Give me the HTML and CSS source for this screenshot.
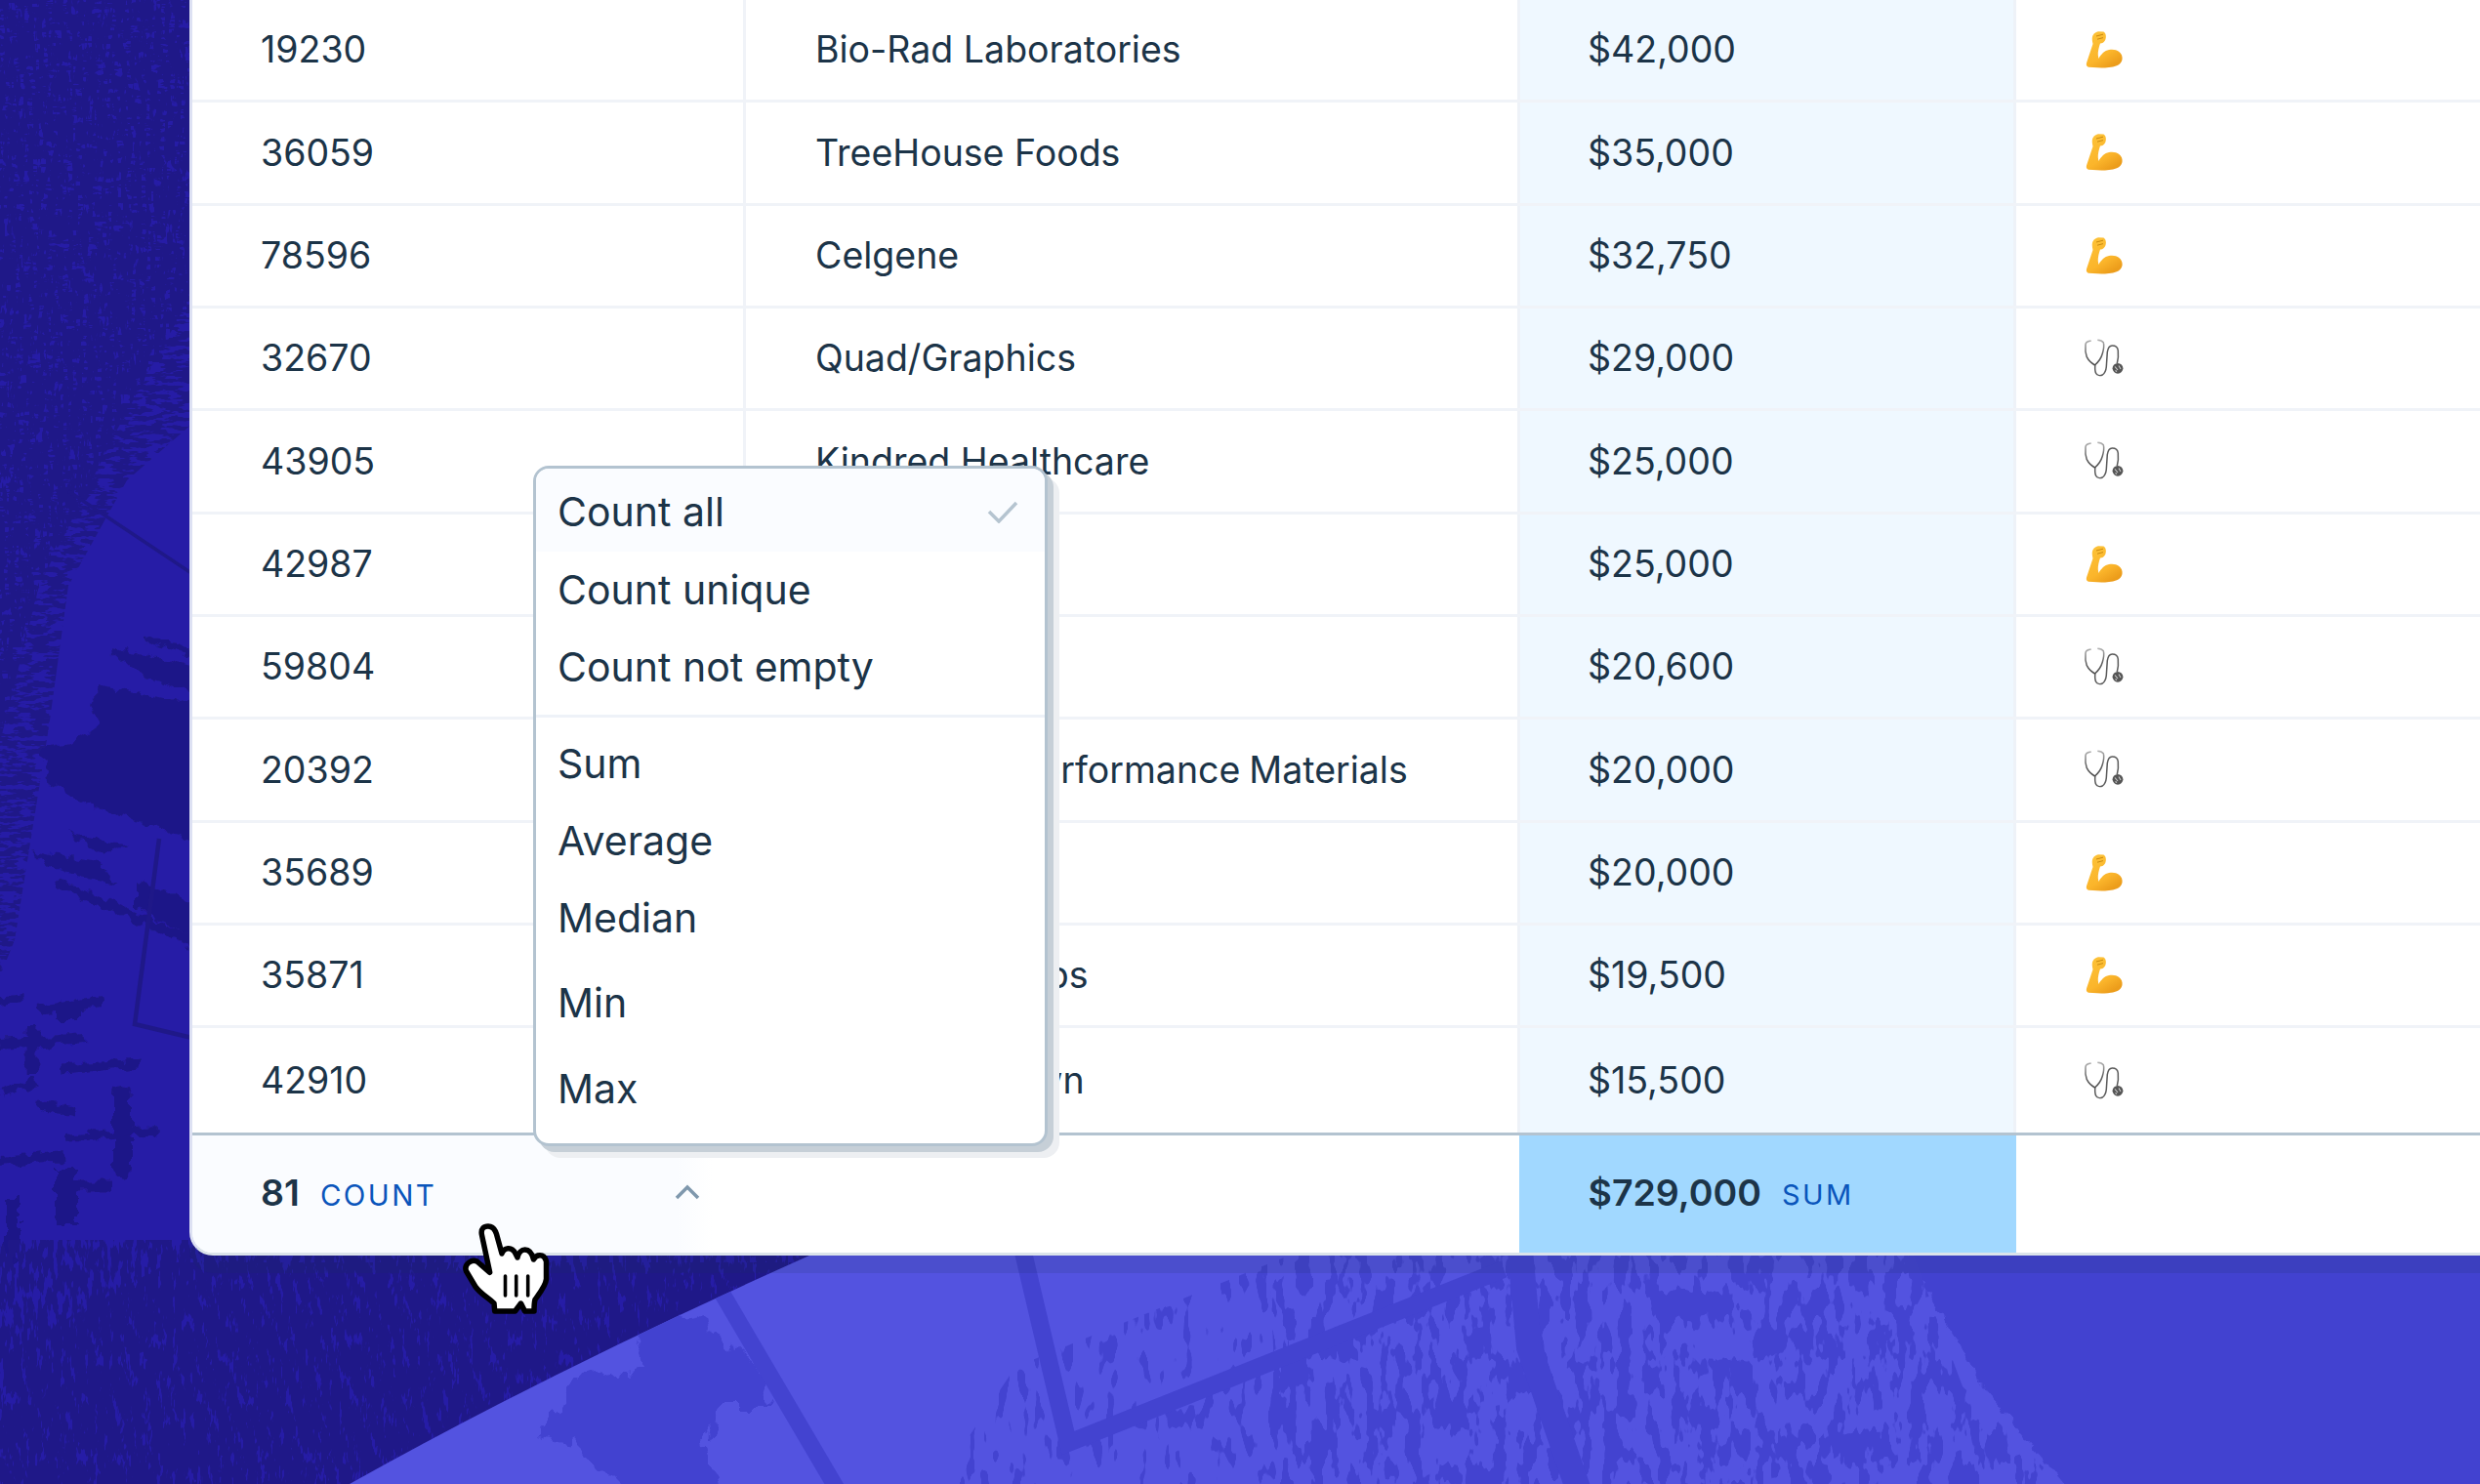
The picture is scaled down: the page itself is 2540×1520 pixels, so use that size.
FILE: index.html
```html
<!DOCTYPE html>
<html lang="en">
<head><meta charset="utf-8"><title>Table</title><link rel="stylesheet" href="styles.css"></head>
<body>
<svg class="backdrop" viewBox="0 0 2540 1520" aria-hidden="true">
  <defs>
    <filter id="grainH" x="0" y="0" width="100%" height="100%" color-interpolation-filters="sRGB">
      <feTurbulence type="fractalNoise" baseFrequency="0.06 0.22" numOctaves="3" seed="7"/>
      <feColorMatrix values="0 0 0 0 0.122  0 0 0 0 0.094  0 0 0 0 0.533  0 0 0 16 -7"/>
    </filter>
    <filter id="grainV" x="0" y="0" width="100%" height="100%" color-interpolation-filters="sRGB">
      <feTurbulence type="fractalNoise" baseFrequency="0.2 0.05" numOctaves="3" seed="11"/>
      <feColorMatrix values="0 0 0 0 0.122  0 0 0 0 0.094  0 0 0 0 0.533  0 0 0 16 -6.6"/>
    </filter>
    <filter id="fleckDense" x="0" y="0" width="100%" height="100%" color-interpolation-filters="sRGB">
      <feTurbulence type="fractalNoise" baseFrequency="0.07 0.028" numOctaves="3" seed="3"/>
      <feColorMatrix values="0 0 0 0 0.263  0 0 0 0 0.263  0 0 0 0 0.816  0 0 0 40 -20.2"/>
    </filter>
    <filter id="fleckSparse" x="0" y="0" width="100%" height="100%" color-interpolation-filters="sRGB">
      <feTurbulence type="fractalNoise" baseFrequency="0.09 0.03" numOctaves="2" seed="21"/>
      <feColorMatrix values="0 0 0 0 0.263  0 0 0 0 0.263  0 0 0 0 0.816  0 0 0 40 -24"/>
    </filter>
    <filter id="rough" x="-10%" y="-10%" width="120%" height="120%">
      <feTurbulence type="fractalNoise" baseFrequency="0.09" numOctaves="2" seed="5" result="n"/>
      <feDisplacementMap in="SourceGraphic" in2="n" scale="14" xChannelSelector="R" yChannelSelector="G"/>
    </filter>
    <filter id="roughBig" x="-10%" y="-10%" width="120%" height="120%">
      <feTurbulence type="fractalNoise" baseFrequency="0.05 0.03" numOctaves="3" seed="9" result="n"/>
      <feDisplacementMap in="SourceGraphic" in2="n" scale="34" xChannelSelector="R" yChannelSelector="G"/>
    </filter>
    <clipPath id="upperLeft"><path d="M0 0H197V434L130 492L70 600L50 745L15 963L0 1000Z"/></clipPath>
    <clipPath id="upperLeftDeep"><path d="M0 0H197V300L120 440L40 600L0 760Z"/></clipPath>
    <clipPath id="lowerLeft"><path d="M0 1270H830V1286Q567 1403 358 1520H0Z"/></clipPath>
    <clipPath id="lowerLeftDeep"><path d="M170 1286H830Q567 1403 358 1520H0V1380Z"/></clipPath>
    <clipPath id="lightArea"><path d="M829 1286H2540V1520H358Q567 1403 829 1286Z"/></clipPath>
    <clipPath id="fleckZoneDense"><path d="M1300 1286H1960L2010 1420L2110 1520H1310Z"/></clipPath>
    <clipPath id="fleckZoneSparse"><path d="M1040 1400L1320 1286V1520H960Z"/></clipPath>
  </defs>

  <rect width="2540" height="1520" fill="#261ca6"/>
  <rect width="2540" height="1520" filter="url(#grainH)" clip-path="url(#upperLeft)"/>
  <rect width="2540" height="1520" filter="url(#grainV)" clip-path="url(#upperLeftDeep)"/>

  <g fill="#1f1888" filter="url(#rough)">
    <path d="M43 767L77 759L100 744L93 721L103 704L205 721V862L100 828L50 802Z"/>
    <path d="M112 664L205 683V712L160 698L113 670Z"/>
    <path d="M147 650L205 667V674L150 656Z"/>
    <path d="M67 853L130 865L107 874Z"/>
    <path d="M30 871L100 882L120 908L50 888Z"/>
    <path d="M140 900L205 930V965L140 930Z"/>
  </g>
  <g fill="none" stroke="#1f1888" filter="url(#rough)">
    <path d="M60 905L205 968" stroke-width="10"/>
    <path d="M0 1026L25 1023M37 1034L107 1026" stroke-width="10"/>
    <path d="M68 1030V1046" stroke-width="24"/>
    <path d="M0 1069L88 1063" stroke-width="10"/>
    <path d="M33 1050V1100" stroke-width="13"/>
    <path d="M63 1095L143 1089" stroke-width="9"/>
    <path d="M125 1123V1198" stroke-width="18" stroke-linecap="round"/>
    <path d="M0 1120L37 1108M37 1132L77 1138" stroke-width="9"/>
    <path d="M67 1166L160 1158" stroke-width="8"/>
    <path d="M0 1190L67 1184" stroke-width="10"/>
    <path d="M68 1198V1255" stroke-width="22"/>
    <path d="M57 1215H113" stroke-width="11"/>
    <path d="M13 1226V1295" stroke-width="14"/>
  </g>
  <g fill="none" stroke="#1f1888">
    <path d="M70 503L205 593" stroke-width="3.5"/>
    <path d="M163 859L138 1049L205 1065" stroke-width="4.5"/>
  </g>

  <rect width="2540" height="1520" filter="url(#grainV)" clip-path="url(#lowerLeft)"/>
  <rect width="2540" height="1520" filter="url(#grainV)" clip-path="url(#lowerLeftDeep)" transform="translate(3 7)"/>

  <g clip-path="url(#lightArea)">
    <rect width="2540" height="1520" fill="#5353e0"/>
    <path d="M1945 1270H2580V1540H2130L2031 1420L1992 1353Z" fill="#4343d0" filter="url(#rough)"/>
    <rect width="2540" height="1520" filter="url(#fleckDense)" clip-path="url(#fleckZoneDense)"/>
    <rect width="2540" height="1520" filter="url(#fleckSparse)" clip-path="url(#fleckZoneSparse)"/>
    <path d="M640 1350L700 1340L760 1385L790 1440L740 1440L720 1470L735 1530H640L590 1480L550 1470L600 1410L660 1400Z" fill="#4343d0" filter="url(#roughBig)"/>
    <g fill="none" stroke="#4343d0">
      <path d="M725 1300L866 1540" stroke-width="17"/>
      <path d="M1045 1270L1094 1478L1540 1300" stroke-width="18"/>
      <path d="M1556 1270L1566 1380L1618 1530" stroke-width="26"/>
    </g>
  </g>
</svg>

<div class="card">
  <div class="row"><div class="cell id">19230</div><div class="cell name">Bio-Rad Laboratories</div><div class="cell pay">$42,000</div><div class="cell kind"><svg class="emoji"><use href="#arm"/></svg></div></div>
  <div class="row"><div class="cell id">36059</div><div class="cell name">TreeHouse Foods</div><div class="cell pay">$35,000</div><div class="cell kind"><svg class="emoji"><use href="#arm"/></svg></div></div>
  <div class="row"><div class="cell id">78596</div><div class="cell name">Celgene</div><div class="cell pay">$32,750</div><div class="cell kind"><svg class="emoji"><use href="#arm"/></svg></div></div>
  <div class="row"><div class="cell id">32670</div><div class="cell name">Quad/Graphics</div><div class="cell pay">$29,000</div><div class="cell kind"><svg class="emoji"><use href="#steth"/></svg></div></div>
  <div class="row"><div class="cell id">43905</div><div class="cell name">Kindred Healthcare</div><div class="cell pay">$25,000</div><div class="cell kind"><svg class="emoji"><use href="#steth"/></svg></div></div>
  <div class="row"><div class="cell id">42987</div><div class="cell name"></div><div class="cell pay">$25,000</div><div class="cell kind"><svg class="emoji"><use href="#arm"/></svg></div></div>
  <div class="row"><div class="cell id">59804</div><div class="cell name"></div><div class="cell pay">$20,600</div><div class="cell kind"><svg class="emoji"><use href="#steth"/></svg></div></div>
  <div class="row"><div class="cell id">20392</div><div class="cell name tight">Momentive Performance Materials</div><div class="cell pay">$20,000</div><div class="cell kind"><svg class="emoji"><use href="#steth"/></svg></div></div>
  <div class="row"><div class="cell id">35689</div><div class="cell name"></div><div class="cell pay">$20,000</div><div class="cell kind"><svg class="emoji"><use href="#arm"/></svg></div></div>
  <div class="row"><div class="cell id">35871</div><div class="cell name wider">Sherwood Labs</div><div class="cell pay">$19,500</div><div class="cell kind"><svg class="emoji"><use href="#arm"/></svg></div></div>
  <div class="row last"><div class="cell id">42910</div><div class="cell name wide">Brown &amp; Brown</div><div class="cell pay">$15,500</div><div class="cell kind"><svg class="emoji"><use href="#steth"/></svg></div></div>
  <div class="footer">
    <div class="foot-count"><b>81</b><span class="tag">COUNT</span>
      <svg class="chev" viewBox="0 0 26 16"><path d="M2 14L13 3L24 14"/></svg>
    </div>
    <div class="foot-gap"></div>
    <div class="foot-sum"><b>$729,000</b><span class="tag">SUM</span></div>
    <div class="foot-rest"></div>
  </div>
</div>

<div class="menu">
  <div class="item selected">Count all<svg class="check" viewBox="0 0 32 24"><path d="M2 12L12 22L30 3"/></svg></div>
  <div class="item">Count unique</div>
  <div class="item">Count not empty</div>
  <div class="rule"></div>
  <div class="item">Sum</div>
  <div class="item">Average</div>
  <div class="item">Median</div>
  <div class="item tall first-tall">Min</div>
  <div class="item tall">Max</div>
</div>

<svg class="hand" viewBox="35 33 90 94">
  <path d="M61.7 83.3L53.5 45C52 38 56 36 60 36C64 36 67 39 68.5 44L74 64C76 58 84 56 88 64L90 68C92 58 103 56 106.5 70C109 65 117 63 119.5 72V90C119 97 113 104 108 111C107 115 107 119 107 123H97.5L93.5 115L87.5 123H66.7L66 115C60 109 53 106 47 98L37.5 82C35 76 42 69 48.5 72Z"/>
  <path class="ln" d="M77.5 87V107M88.7 87V107M100.7 87V107"/>
</svg>

<svg class="defs" aria-hidden="true">
  <defs>
    <linearGradient id="armFill" x1="0" y1="0" x2=".6" y2="1"><stop offset="0" stop-color="#fdc43a"/><stop offset=".7" stop-color="#fbb52b"/><stop offset="1" stop-color="#ec9d1b"/></linearGradient>
    <linearGradient id="tube" x1="0" y1="0" x2="0" y2="1"><stop offset="0" stop-color="#b0b0b0"/><stop offset=".5" stop-color="#666"/><stop offset="1" stop-color="#4a4a4a"/></linearGradient>
    <symbol id="arm" viewBox="0 1 44 40">
      <path d="M6 38.7C3.5 38 3.5 35.5 4.5 33L10.5 15C9.5 11 9.5 8 10.5 6.2C12 3.5 14 2.7 16 2.2L21.5 2.5C24 4 24.5 8 23.2 11C22 13.5 20 14.5 18 14.5C16.8 18 15.5 23 15.8 26.5L16.4 30C19 25.5 22.5 21.8 27 21C31 20.2 35 21 37 22.8C40 25 41 28 40.5 31C40 34 38 36 35 37.2C30 39 24 39.6 19.3 39.6Z" fill="url(#armFill)"/>
      <path d="M14 7L21 5.2M15 10.2L21 8.6" stroke="#c98a10" stroke-width="1" fill="none"/>
    </symbol>
    <symbol id="steth" viewBox="0 0 44 40">
      <path d="M8.7 2C5 2.5 3 4 3 6C2.5 11 3 15 4.3 18.7C6 22 9 25 12.5 27C16 24 19 20 20.3 15.3C21.5 11 22 6 21.3 3.7C20 2 18 1.5 15.3 1.3" fill="none" stroke="url(#tube)" stroke-width="1.5"/>
      <path d="M12.8 27C12.5 31 13 34 13.7 35.3C15 37.5 18 38 20.3 37C23 35 24 32 24.3 28.7L25.3 13.7C26 9 28 7 30.3 7C33.5 7 36 9 36.3 12C36.8 17 36.5 21 35.3 25.3" fill="none" stroke="#5a5a5a" stroke-width="1.5"/>
      <circle cx="36" cy="30.3" r="5.4" fill="#555"/><path d="M33 28.5L36 32M37 27.5L39 31M33.5 32.5L35 33.5" stroke="#ccc" stroke-width="1.1"/>
    </symbol>
  </defs>
</svg>
</body>
</html>
```
FILE: styles.css
```css
html, body { margin: 0; padding: 0; }
body {
  width: 2540px; height: 1520px; overflow: hidden; position: relative;
  background: #261ca6;
  font-family: Inter, "Liberation Sans", sans-serif;
  color: #1c3448;
  font-size: 37.5px;
}
.backdrop { position: absolute; inset: 0; width: 2540px; height: 1520px; display: block; }
.defs { position: absolute; width: 0; height: 0; }
.card {
  position: absolute; left: 194px; top: 0; width: 2400px; height: 1286px;
  background: #fff; border-radius: 0 0 24px 24px;
  border-bottom: 3px solid #dbe3ea; border-left: 3px solid #dde1f3; box-sizing: border-box;
  display: flex; flex-direction: column; overflow: hidden;
  box-shadow: 0 18px 0 rgba(30, 50, 90, .14);
}
.row { height: 105.33px; display: flex; border-bottom: 3px solid #f0f3f8; box-sizing: border-box; flex: none; }
.row.last { height: 110px; border-bottom: 3px solid #b3c3d0; }
.cell { display: flex; align-items: center; box-sizing: border-box; line-height: 1; white-space: nowrap; }
.id { width: 567px; padding-left: 70px; border-right: 3px solid #f0f3f8; }
.name { width: 790px; padding-left: 71px; }
.tight { word-spacing: -1.6px; }
.wide { word-spacing: 2.5px; }
.wider { word-spacing: 3.5px; }
.pay { width: 511px; padding-left: 69px; background: #eff8ff; border-left: 3px solid #eef2f8; border-right: 3px solid #eef2f8; }
.kind { flex: 1; padding-left: 68px; }
.emoji { width: 44px; height: 40px; display: block; }
.footer { flex: 1; display: flex; align-items: stretch; }
.footer b { font-weight: 600; }
.foot-count {
  width: 533px; display: flex; align-items: center; padding: 0 0 4px 70px; box-sizing: border-box;
  background: linear-gradient(90deg, #fafcff 93%, #fff 100%); position: relative;
}
.foot-gap { width: 825.5px; }
.foot-sum { width: 509.5px; background: #a1d8ff; display: flex; align-items: center; padding: 0 0 4px 71px; box-sizing: border-box; }
.foot-rest { flex: 1; }
.tag { color: #0a55bb; font-size: 29.5px; letter-spacing: 2.4px; margin-left: 21px; margin-top: 5px; }
.foot-sum .tag { font-size: 29px; }
.chev { width: 26px; height: 16px; margin-left: auto; margin-right: 13px; display: block; }
.chev path { fill: none; stroke: #7f98ad; stroke-width: 3.5; }
.menu {
  position: absolute; left: 546px; top: 477px; width: 527px; height: 697px; box-sizing: border-box;
  background: #fff; border: 3px solid #b3c3d0; border-radius: 16px;
  box-shadow: 6px 6px 0 #c6cfd7, 12px 12px 0 #edeff2;
  font-size: 41px;
}
.item { height: 79px; display: flex; align-items: center; padding-left: 22px; line-height: 1; flex: none; box-sizing: border-box; }
.item.selected { height: 85px; padding-top: 3px; background: #fafcff; border-radius: 13px 13px 0 0; justify-content: space-between; padding-right: 27px; }
.item.tall { height: 88px; }
.item.first-tall { margin-top: 3px; }
.rule { height: 3px; background: #eef2f8; margin: 9px 0 8px; }
.check { width: 32px; height: 24px; display: block; }
.check path { fill: none; stroke: #b5c4d0; stroke-width: 3.5; }
.hand { position: absolute; left: 475px; top: 1253px; width: 90px; height: 94px; overflow: visible; }
.hand path { fill: #fff; stroke: #000; stroke-width: 5.5; stroke-linejoin: round; }
.hand .ln { fill: none; stroke-width: 3.6; stroke-linecap: round; }
```
